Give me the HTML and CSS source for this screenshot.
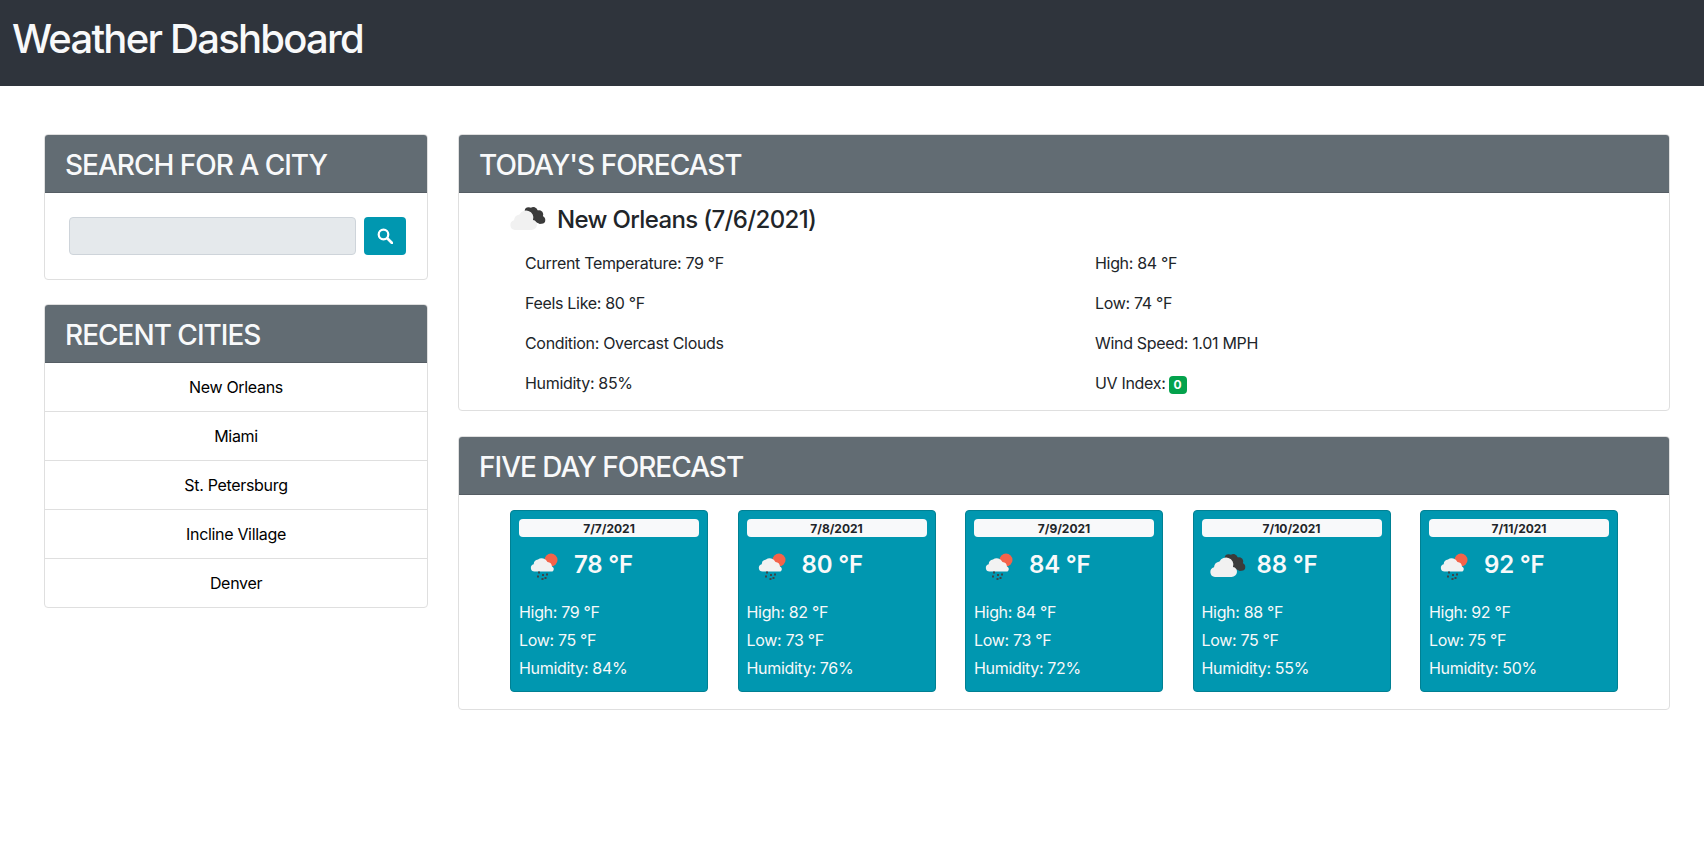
FILE: index.html
```html
<!DOCTYPE html>
<html lang="en">
<head>
<meta charset="utf-8">
<title>Weather Dashboard</title>
<link rel="stylesheet" href="styles.css">
</head>
<body>
<svg class="defs" width="0" height="0" aria-hidden="true">
  <defs>
    <symbol id="overcast" viewBox="0 0 50 50">
      <g fill="#3b3b3b">
        <circle cx="26.500" cy="19" r="3.800"/>
        <circle cx="31.500" cy="19.500" r="4.200"/>
        <circle cx="37" cy="22.500" r="4.200"/>
        <circle cx="39.500" cy="28" r="3.800"/>
        <path d="M24 17l8-2 9 9 2 5-5 3-7-3z"/>
      </g>
      <path d="M13 38a5 5 0 0 1-1-9.800 6.500 6.500 0 0 1 5.500-5.700 7.500 7.500 0 0 1 9-3.500 7 7 0 0 1 4.500 9 5 5 0 0 1 4 5 5.500 5.500 0 0 1-5.500 5z" fill="#f1f1f1"/>
    </symbol>
    <symbol id="rain-sun" viewBox="0 0 50 50">
      <circle cx="32" cy="21" r="6.500" fill="#f4634a"/>
      <path d="M15.500 32.500a3.700 3.700 0 0 1-.8-7.300 5 5 0 0 1 4.300-4.700 6.500 6.500 0 0 1 9.500 2.500 5 5 0 0 1 4.500 4.500 2.800 2.800 0 0 1 .5 5z" fill="#f2f2f2"/>
      <path d="M19 32.500h2v2h-2zM18 36.500h2v2h-2zM23 35h2v2h-2zM22.500 39h2v2h-2zM27 34.500h2v2h-2zM25.500 38h2v2h-2z" fill="#3c4448"/>
    </symbol>
  </defs>
</svg>
<header class="topbar"><h1 class="brand">Weather Dashboard</h1></header>
<main class="layout">
  <aside class="sidebar">
    <section class="card">
      <h2 class="card-head">SEARCH FOR A CITY</h2>
      <form class="search">
        <input class="search-input" type="text" aria-label="City">
        <button class="search-btn" type="button" aria-label="Search">
          <svg class="search-icon" viewBox="0 0 16 16"><circle cx="6.500" cy="6.500" r="4.800" fill="none" stroke="#fff" stroke-width="2.200"/><path d="M10.500 10.500L15 15" stroke="#fff" stroke-width="2.600" stroke-linecap="round"/></svg>
        </button>
      </form>
    </section>
    <section class="card">
      <h2 class="card-head">RECENT CITIES</h2>
      <ul class="cities">
        <li class="city">New Orleans</li>
        <li class="city">Miami</li>
        <li class="city">St. Petersburg</li>
        <li class="city">Incline Village</li>
        <li class="city">Denver</li>
      </ul>
    </section>
  </aside>
  <div class="content">
    <section class="card">
      <h2 class="card-head">TODAY'S FORECAST</h2>
      <div class="today">
        <div class="today-title">
          <svg class="today-icon"><use href="#overcast"/></svg>
          <h3 class="today-city">New Orleans (7/6/2021)</h3>
        </div>
        <div class="today-grid">
          <p class="stat">Current Temperature: 79 °F</p>
          <p class="stat">High: 84 °F</p>
          <p class="stat">Feels Like: 80 °F</p>
          <p class="stat">Low: 74 °F</p>
          <p class="stat">Condition: Overcast Clouds</p>
          <p class="stat">Wind Speed: 1.01 MPH</p>
          <p class="stat">Humidity: 85%</p>
          <p class="stat">UV Index: <span class="badge">0</span></p>
        </div>
      </div>
    </section>
    <section class="card">
      <h2 class="card-head">FIVE DAY FORECAST</h2>
      <div class="days">
        <article class="day">
          <div class="day-date">7/7/2021</div>
          <div class="day-main"><svg class="day-icon"><use href="#rain-sun"/></svg><span class="day-temp">78 °F</span></div>
          <p class="day-line">High: 79 °F</p><p class="day-line">Low: 75 °F</p><p class="day-line">Humidity: 84%</p>
        </article>
        <article class="day">
          <div class="day-date">7/8/2021</div>
          <div class="day-main"><svg class="day-icon"><use href="#rain-sun"/></svg><span class="day-temp">80 °F</span></div>
          <p class="day-line">High: 82 °F</p><p class="day-line">Low: 73 °F</p><p class="day-line">Humidity: 76%</p>
        </article>
        <article class="day">
          <div class="day-date">7/9/2021</div>
          <div class="day-main"><svg class="day-icon"><use href="#rain-sun"/></svg><span class="day-temp">84 °F</span></div>
          <p class="day-line">High: 84 °F</p><p class="day-line">Low: 73 °F</p><p class="day-line">Humidity: 72%</p>
        </article>
        <article class="day">
          <div class="day-date">7/10/2021</div>
          <div class="day-main"><svg class="day-icon"><use href="#overcast"/></svg><span class="day-temp">88 °F</span></div>
          <p class="day-line">High: 88 °F</p><p class="day-line">Low: 75 °F</p><p class="day-line">Humidity: 55%</p>
        </article>
        <article class="day">
          <div class="day-date">7/11/2021</div>
          <div class="day-main"><svg class="day-icon"><use href="#rain-sun"/></svg><span class="day-temp">92 °F</span></div>
          <p class="day-line">High: 92 °F</p><p class="day-line">Low: 75 °F</p><p class="day-line">Humidity: 50%</p>
        </article>
      </div>
    </section>
  </div>
</main>
</body>
</html>
```

FILE: styles.css
```css
* { box-sizing: border-box; }
body {
  margin: 0;
  background: #fff;
  color: #212529;
  font-family: Inter, "Liberation Sans", sans-serif;
  font-size: 16px;
  line-height: 1.5;
  letter-spacing: -0.32px;
}
.defs { position: absolute; }
.topbar {
  height: 86px;
  padding: 15px 12px 0;
  background: #2f343c;
}
.brand {
  margin: 0;
  color: #f8f9fa;
  font-size: 40px;
  font-weight: 500;
  line-height: 48px;
  letter-spacing: -1.75px;
}
.layout {
  display: flex;
  gap: 30px;
  padding: 48px 34px 0 44px;
}
.sidebar { width: 384px; flex: none; display: flex; flex-direction: column; gap: 24px; }
.content { flex: 1; display: flex; flex-direction: column; gap: 25px; min-width: 0; }
.card {
  border: 1px solid #dfdfdf;
  border-radius: 4px;
  overflow: hidden;
  background: #fff;
}
.card-head {
  margin: 0;
  height: 58px;
  padding: 10px 20px 0;
  background: #626c73;
  border-bottom: 1px solid #555d64;
  color: #f8f9fa;
  font-size: 28px;
  font-weight: 500;
  line-height: 40px;
  letter-spacing: -1px;
}
.search {
  display: flex;
  gap: 8px;
  padding: 24px 21px 24px 24px;
}
.search-input {
  flex: 1;
  min-width: 0;
  height: 38px;
  border: 1px solid #ced4da;
  border-radius: 4px;
  background: #e5e9ec;
}
.search-btn {
  width: 42px;
  height: 38px;
  border: 0;
  border-radius: 4px;
  background: #0097b0;
  padding: 0;
  display: flex;
  align-items: center;
  justify-content: center;
}
.search-icon { width: 16px; height: 16px; }
.cities { margin: 0; padding: 0; list-style: none; }
.city {
  height: 49px;
  line-height: 48px;
  text-align: center;
  color: #000;
  border-bottom: 1px solid #dfdfdf;
}
.city:last-child { border-bottom: 0; height: 48px; }
.today { padding: 0 20px 2px 43px; }
.today-title {
  display: flex;
  align-items: center;
  height: 55px;
  padding-bottom: 3px;
  gap: 5px;
}
.today-icon { width: 50px; height: 50px; flex: none; margin-top: -4px; }
.today-city { margin: 0; font-size: 24px; font-weight: 500; line-height: 29px; letter-spacing: -0.64px; }
.today-grid {
  display: grid;
  grid-template-columns: 570px 1fr;
  padding-left: 23px;
}
.stat {
  margin: 0;
  height: 40px;
  line-height: 30px;
}
.badge {
  display: inline-block;
  margin-left: -1px;
  padding: 0 5px;
  background: #04a24c;
  border-radius: 4px;
  color: #fff;
  font-size: 12px;
  font-weight: 700;
  line-height: 18px;
  letter-spacing: 0;
}
.days {
  display: flex;
  justify-content: space-between;
  padding: 15px 51px 17px;
}
.day {
  width: 198px;
  height: 182px;
  padding: 8px;
  background: #0097b0;
  border: 1px solid #008093;
  border-radius: 4px;
  color: #f8f9fa;
}
.day-date {
  height: 18px;
  background: #f8f9fa;
  border-radius: 4px;
  color: #212529;
  text-align: center;
  font-size: 12px;
  font-weight: 700;
  line-height: 20px;
  letter-spacing: 0;
}
.day-main {
  display: flex;
  align-items: center;
  height: 54px;
  margin-bottom: 7px;
  gap: 5px;
}
.day-icon { width: 50px; height: 50px; flex: none; }
.day-temp { font-size: 24px; font-weight: 600; line-height: 29px; letter-spacing: -0.2px; }
.day-line { margin: 0; height: 28px; line-height: 28px; }
```
